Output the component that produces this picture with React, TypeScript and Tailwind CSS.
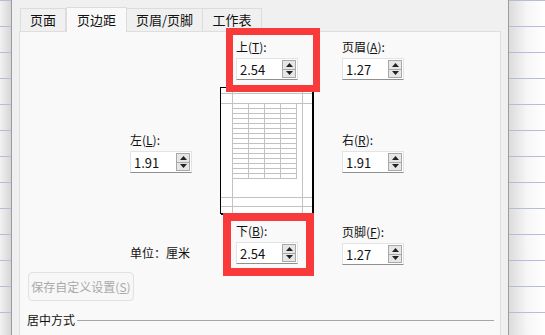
import React from 'react';

const font = { fontFamily: '"Noto Sans CJK SC", "Noto Sans", sans-serif' };

function Spin({ value }: { value: string }) {
  return (
    <div className="relative flex h-[22px] w-[62px] items-center border border-[#e3e3e3] border-b-[#8f8f8f] bg-white pl-[3px]">
      <span className="text-[13px] leading-none text-[#111]">{value}</span>
      <div className="absolute right-[1px] top-[1px] flex h-[18px] w-[14px] flex-col border border-[#a8a8a8] bg-[#e6e6e6]">
        <div className="flex flex-1 items-center justify-center border-b border-[#a8a8a8]">
          <svg width="7" height="4" viewBox="0 0 7 4">
            <polygon points="3.5,0 7,4 0,4" fill="#222" />
          </svg>
        </div>
        <div className="flex flex-1 items-center justify-center">
          <svg width="7" height="4" viewBox="0 0 7 4">
            <polygon points="0,0 7,0 3.5,4" fill="#222" />
          </svg>
        </div>
      </div>
    </div>
  );
}

function Field({ name, k, value }: { name: string; k: string; value: string }) {
  return (
    <div className="flex flex-col">
      <div className="mb-[3px] h-[16px] text-[12px] leading-[16px] text-[#111]">
        {name}(<span className="underline">{k}</span>):
      </div>
      <Spin value={value} />
    </div>
  );
}

function PagePreview() {
  const cols = [12, 28, 44, 60, 76];
  const rows = Array.from({ length: 16 }, (_, i) => 16 + i * 5);
  return (
    <svg width="94" height="128" viewBox="0 0 94 128" className="block">
      <rect x="0" y="0" width="94" height="128" fill="#fff" />
      <g stroke="#c2c2c2" strokeWidth="1">
        <line x1="12.5" y1="0" x2="12.5" y2="126" />
        <line x1="82.5" y1="0" x2="82.5" y2="126" />
        <line x1="0" y1="6.5" x2="92" y2="6.5" />
        <line x1="0" y1="16.5" x2="92" y2="16.5" />
        <line x1="0" y1="110.5" x2="92" y2="110.5" />
        <line x1="0" y1="119.5" x2="92" y2="119.5" />
        {cols.map((c) => (
          <line key={'c' + c} x1={c + 0.5} y1="16" x2={c + 0.5} y2="91" />
        ))}
        {rows.map((r) => (
          <line key={'r' + r} x1="12" y1={r + 0.5} x2="77" y2={r + 0.5} />
        ))}
      </g>
      <rect x="0.5" y="0.5" width="92" height="126" fill="none" stroke="#000" strokeWidth="1" />
      <line x1="93" y1="1" x2="93" y2="128" stroke="#000" strokeWidth="2" />
      <line x1="1" y1="127" x2="94" y2="127" stroke="#000" strokeWidth="2" />
    </svg>
  );
}

export default function App() {
  const lines = Array.from({ length: 13 }, (_, i) => i);
  return (
    <div className="relative flex h-[335px] w-[545px] overflow-hidden bg-white" style={font}>
      {/* left sheet strip */}
      <div className="flex w-[12px] flex-col border-r border-[#9c9c9c] bg-gradient-to-r from-[#f2f2f2] to-[#d6d6d6]">
        <div className="h-[16px] border-b border-[#b7bdd8]" />
        {lines.map((i) => (
          <div key={i} className="h-[26px] shrink-0 border-b border-[#b7bdd8]" />
        ))}
      </div>

      {/* dialog */}
      <div className="flex w-[497px] flex-col border-r border-[#9c9c9c] bg-[#f0f0f0]">
        <div className="flex items-end pl-[8px] pt-[7px]">
          <div className="flex h-[23px] w-[46px] items-center justify-center border border-b-0 border-[#dcdcdc] bg-[#f0f0f0] text-[13px] text-[#111]">
            页面
          </div>
          <div className="z-10 -mb-px flex h-[25px] w-[61px] items-center justify-center border border-b-0 border-[#dcdcdc] bg-[#f9f9f9] text-[13px] text-[#111]">
            页边距
          </div>
          <div className="flex h-[23px] w-[76px] items-center justify-center border border-b-0 border-l-0 border-[#dcdcdc] bg-[#f0f0f0] text-[13px] text-[#111]">
            页眉/页脚
          </div>
          <div className="flex h-[23px] w-[59px] items-center justify-center border border-b-0 border-l-0 border-[#dcdcdc] bg-[#f0f0f0] text-[13px] text-[#111]">
            工作表
          </div>
        </div>

        <div className="ml-[7px] w-[482px] flex-1 border border-b-0 border-[#dedede] bg-[#f9f9f9]">
          <div className="flex pl-[110px]">
            {/* col A */}
            <div className="flex w-[90px] flex-col pt-[100px]">
              <Field name="左" k="L" value="1.91" />
              <div className="mt-[72px] h-[16px] pl-[0px] text-[12px] leading-[16px] text-[#111]">单位：厘米</div>
            </div>
            {/* col B */}
            <div className="flex w-[94px] flex-col pt-[7px]">
              <div className="pl-[16px]">
                <Field name="上" k="T" value="2.54" />
              </div>
              <div className="mt-[7px]">
                <PagePreview />
              </div>
              <div className="mt-[8px] pl-[16px]">
                <Field name="下" k="B" value="2.54" />
              </div>
            </div>
            {/* col C */}
            <div className="ml-[28px] flex flex-col pt-[7px]">
              <Field name="页眉" k="A" value="1.27" />
              <div className="mt-[52px]">
                <Field name="右" k="R" value="1.91" />
              </div>
              <div className="mt-[51px]">
                <Field name="页脚" k="F" value="1.27" />
              </div>
            </div>
          </div>

          <div className="ml-[8px] mt-[7px] flex h-[29px] w-[106px] items-center justify-center rounded-[4px] border border-[#e2e2e2] bg-[#f7f7f7] text-[12px] text-[#a9a9a9]">
            保存自定义设置(<span className="underline">S</span>)
          </div>

          <div className="mt-[11px] flex items-center pl-[7px]">
            <span className="h-[16px] text-[12px] leading-[16px] text-[#111]">居中方式</span>
            <div className="ml-[2px] h-px w-[417px] bg-[#a6a6a6]" />
          </div>
        </div>
      </div>

      {/* right sheet strip */}
      <div className="flex flex-1 flex-col bg-gradient-to-r from-[#dcdcdc] via-[#f6f6f6] to-white">
        <div className="h-[16px] border-b border-[#b7bdd8]" />
        {lines.map((i) => (
          <div key={i} className="h-[26px] shrink-0 border-b border-[#b7bdd8]" />
        ))}
      </div>

      {/* highlight boxes */}
      <div className="pointer-events-none absolute left-[226px] top-[28px] h-[64px] w-[94px] border-[7px] border-[#f83a3a]" />
      <div className="pointer-events-none absolute left-[223px] top-[213px] h-[63px] w-[91px] border-[8px] border-[#f83a3a]" />
    </div>
  );
}
